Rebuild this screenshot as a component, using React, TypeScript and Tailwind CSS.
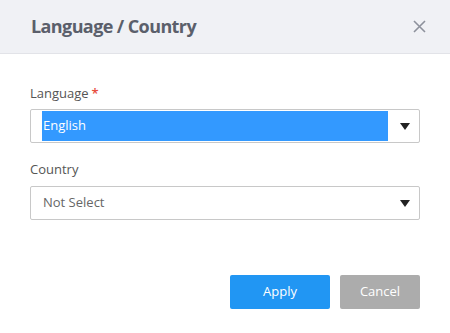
import React from 'react';

const Caret: React.FC = () => (
  <svg width="10" height="7" viewBox="0 0 10 7" className="shrink-0">
    <path d="M0 0h10L5 7z" fill="#222" />
  </svg>
);

const App: React.FC = () => {
  return (
    <div className="w-[450px] h-[333px] bg-white flex flex-col font-['Open_Sans',sans-serif]">
      {/* Header */}
      <div className="h-[54px] bg-[#f0f1f5] border-b border-[#e2e3e8] flex items-center justify-between pl-[31px] pr-[24px]">
        <h2 className="text-[18px] font-bold text-[#5b5f6b] tracking-[-0.6px]">Language / Country</h2>
        <button className="w-[14px] h-[14px] flex items-center justify-center">
          <svg width="13" height="13" viewBox="0 0 13 13">
            <path d="M1 1l11 11M12 1L1 12" stroke="#8d919c" strokeWidth="1.6" />
          </svg>
        </button>
      </div>

      {/* Body */}
      <div className="flex-1 px-[30px] pt-[30px] flex flex-col">
        <label className="text-[13px] text-[#555] leading-[18px]">
          Language<span className="ml-[3px] text-[#e74c3c] font-semibold">*</span>
        </label>
        <div className="mt-[7px] h-[34px] border border-[#c8c8c8] rounded-[2px] flex items-center pl-[11px] pr-[9px]">
          <div className="h-[30px] w-[346px] bg-[#3399ff] text-white text-[13px] flex items-center pl-[1px]">English</div>
          <div className="flex-1 flex justify-end">
            <Caret />
          </div>
        </div>

        <label className="mt-[17px] text-[13px] text-[#555] leading-[18px]">Country</label>
        <div className="mt-[8px] h-[34px] border border-[#c8c8c8] rounded-[2px] flex items-center justify-between pl-[12px] pr-[9px]">
          <span className="text-[13px] text-[#666]">Not Select</span>
          <Caret />
        </div>

        <div className="mt-[55px] flex justify-end gap-[10px]">
          <button className="w-[100px] h-[34px] bg-[#2196f3] text-white text-[13px] rounded-[2px]">Apply</button>
          <button className="w-[80px] h-[34px] bg-[#acacac] text-white text-[13px] rounded-[2px]">Cancel</button>
        </div>
      </div>
    </div>
  );
};

export default App;
